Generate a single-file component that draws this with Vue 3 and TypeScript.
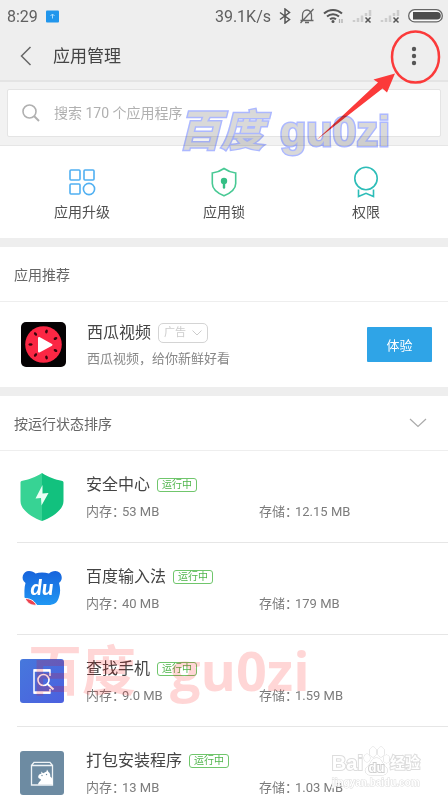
<script setup lang="ts">
interface AppEntry {
  id: string
  name: string
  memory: string
  storage: string
}

interface Shortcut {
  id: string
  label: string
}

const shortcuts: Shortcut[] = [
  { id: 'upgrade', label: '应用升级' },
  { id: 'lock', label: '应用锁' },
  { id: 'permission', label: '权限' },
]

const apps: AppEntry[] = [
  { id: 'security', name: '安全中心', memory: '53 MB', storage: '12.15 MB' },
  { id: 'input', name: '百度输入法', memory: '40 MB', storage: '179 MB' },
  { id: 'find', name: '查找手机', memory: '9.0 MB', storage: '1.59 MB' },
  { id: 'installer', name: '打包安装程序', memory: '13 MB', storage: '1.03 MB' },
]

const signals: number[] = [1, 2]
</script>

<template>
  <div class="page">
    <div class="status">
      <span>8:29</span>
      <svg class="status-app" width="13" height="13" viewBox="0 0 13 13">
        <rect width="13" height="12" y="0.5" rx="1" fill="#2196ec" />
        <path d="M4.5 6 6.5 4l2 2M6.5 4v4.500" fill="none" stroke="#a9dcff" stroke-width="1" />
      </svg>
      <span class="speed">39.1K/s</span>
      <svg width="12" height="16" viewBox="0 0 12 16">
        <path d="M1 4.500 10.500 11.500 6 15V1l4.500 3.500L1 11.500" fill="none" stroke="#555" stroke-width="1.500" />
      </svg>
      <svg width="16" height="16" viewBox="0 0 16 16">
        <path d="M1.500 12.500h13M3.500 12V7a4.500 5 0 0 1 9 0v5M6 14.500h4M14.500 1 1.500 15" fill="none" stroke="#666" stroke-width="1.300" />
      </svg>
      <svg width="21" height="16" viewBox="0 0 21 16">
        <path d="M1 5.500a13 13 0 0 1 18 0M4 8.500a9 9 0 0 1 12 0M7 11.300a5 5 0 0 1 6 0" fill="none" stroke="#555" stroke-width="2" />
        <circle cx="10" cy="13.500" r="1.500" fill="#555" />
        <path d="M16.500 11v4M19 11v4" stroke="#aaa" stroke-width="1.200" />
      </svg>
      <svg v-for="s in signals" :key="s" width="20" height="15" viewBox="0 0 20 15">
        <path d="M2 13v-2M6 13V9M10 13V6.500M14 7V4M18 7V1" stroke="#ccc" stroke-width="2.500" />
        <path d="m13.500 8.500 5 5m0-5-5 5" stroke="#555" stroke-width="1.500" />
      </svg>
      <svg width="35" height="14" viewBox="0 0 35 14">
        <rect x="0.700" y="0.700" width="33.600" height="12.200" rx="6" fill="#f8f8f8" stroke="#666" stroke-width="1.300" />
        <path d="M5 3h24a3.500 3.500 0 0 1 0 7.600H5z" fill="#4d4d4d" />
      </svg>
    </div>

    <header class="header">
      <button class="icon-button back" type="button" aria-label="返回">
        <svg width="12" height="20" viewBox="0 0 12 20">
          <path d="M10.500 1 1.500 10l9 9" fill="none" stroke="#666" stroke-width="1.500" />
        </svg>
      </button>
      <h1>应用管理</h1>
      <button class="icon-button more" type="button" aria-label="更多">
        <svg width="6" height="20" viewBox="0 0 6 20">
          <g fill="#555">
            <circle cx="3" cy="3" r="2.200" />
            <circle cx="3" cy="10" r="2.200" />
            <circle cx="3" cy="17" r="2.200" />
          </g>
        </svg>
      </button>
    </header>

    <div class="search-area">
      <label class="search">
        <svg width="18" height="18" viewBox="0 0 18 18">
          <circle cx="7.500" cy="7.500" r="6.500" fill="none" stroke="#b0b0b0" stroke-width="1.600" />
          <path d="m12 12 5 5" stroke="#b0b0b0" stroke-width="2" />
        </svg>
        <input type="search" placeholder="搜索 170 个应用程序" aria-label="搜索应用程序" />
      </label>
    </div>

    <nav class="shortcuts">
      <a v-for="item in shortcuts" :key="item.id" href="#">
        <svg v-if="item.id === 'upgrade'" width="28" height="32" viewBox="0 0 28 32" fill="none" stroke="#50b0f2" stroke-width="1.600">
          <rect x="2" y="4" width="10" height="10" rx="1" />
          <rect x="16" y="4" width="10" height="10" rx="1" />
          <rect x="2" y="18" width="10" height="10" rx="1" />
          <circle cx="21" cy="23" r="5.600" />
        </svg>
        <svg v-else-if="item.id === 'lock'" width="28" height="32" viewBox="0 0 28 32">
          <path d="M14 2.500C10.500 5 6.500 6.500 2.300 7v10.500c0 5 5 9.500 11.700 12.300 6.700-2.800 11.700-7.300 11.700-12.300V7C21.500 6.500 17.500 5 14 2.500Z" fill="none" stroke="#48c994" stroke-width="1.600" />
          <circle cx="14" cy="15" r="3.200" fill="#35bf85" />
          <path d="M14 15v6.500" stroke="#35bf85" stroke-width="2.400" stroke-linecap="round" />
        </svg>
        <svg v-else width="28" height="32" viewBox="0 0 28 32" fill="none" stroke="#2dbdb8" stroke-width="1.600">
          <circle cx="14" cy="12.500" r="11.200" />
          <path d="M6.500 23.500v7L14 27.300l7.500 3.200v-7" />
        </svg>
        <span>{{ item.label }}</span>
      </a>
    </nav>

    <section class="block">
      <h2 class="section-title">应用推荐</h2>
      <div class="promo">
        <svg class="promo-icon" width="45" height="45" viewBox="0 0 45 45">
          <rect width="45" height="45" rx="5" fill="#050203" />
          <circle cx="22.500" cy="22.500" r="18.300" fill="#fb2744" />
          <g fill="#35060d">
            <ellipse cx="25.500" cy="9.500" rx="1.300" ry="2" transform="rotate(12 25.500 9.500)" />
            <ellipse cx="34.500" cy="16.500" rx="1.300" ry="2" transform="rotate(60 34.500 16.500)" />
            <ellipse cx="34.500" cy="28.500" rx="1.300" ry="2" transform="rotate(120 34.500 28.500)" />
            <ellipse cx="25.500" cy="35.500" rx="1.300" ry="2" transform="rotate(-12 25.500 35.500)" />
            <ellipse cx="14.500" cy="33" rx="1.300" ry="2" transform="rotate(35 14.500 33)" />
            <ellipse cx="9.500" cy="22.500" rx="2" ry="1.300" />
            <ellipse cx="14.500" cy="12" rx="1.300" ry="2" transform="rotate(-35 14.500 12)" />
          </g>
          <path d="M18 16v13.500l12.500-6.700Z" fill="#fff" stroke="#fff" stroke-width="2" stroke-linejoin="round" />
        </svg>
        <div class="promo-text">
          <div class="name-line">
            <h3>西瓜视频</h3>
            <button class="ad" type="button">
              广告
              <svg width="10" height="6" viewBox="0 0 10 6">
                <path d="m0.500 0.500 4.500 4.500 4.500-4.500" fill="none" stroke="#ccc" />
              </svg>
            </button>
          </div>
          <p>西瓜视频，给你新鲜好看</p>
        </div>
        <button class="try" type="button">体验</button>
      </div>
    </section>

    <section class="block">
      <button class="section-title sort" type="button">
        <span>按运行状态排序</span>
        <svg width="18" height="10" viewBox="0 0 18 10">
          <path d="m1 1 8 7.500L17 1" fill="none" stroke="#aaa" stroke-width="1.200" />
        </svg>
      </button>
      <ul class="apps">
        <li v-for="app in apps" :key="app.id">
          <svg v-if="app.id === 'security'" class="app-icon" width="44" height="50" viewBox="0 0 44 50">
            <path d="M22 1C16 5 8 8 2.500 8.700.900 8.900.500 9.500.500 11v18C.500 38 12 45.500 22 49Z" fill="#37d394" />
            <path d="M22 1c6 4 14 7 19.500 7.700 1.600.200 2 .800 2 2.300v18c0 9-11.500 16.500-21.500 20Z" fill="#12c17e" />
            <path d="M22.500 13 15.500 26.500l5.500-.500.500 7.500L28.500 21l-6 .500Z" fill="#eafff5" />
          </svg>
          <svg v-else-if="app.id === 'input'" class="app-icon" width="44" height="44" viewBox="0 0 44 44">
            <defs>
              <linearGradient id="bear" x1="0" y1="0" x2="0" y2="1">
                <stop offset="0" stop-color="#1763dc" />
                <stop offset="1" stop-color="#2097f3" />
              </linearGradient>
            </defs>
            <path d="M9 4c3 0 5 1 6.500 2.500 4-1.200 9-1.200 13.500 0C30.500 5 32.500 4 35.500 4 42 4 44 13 39 16c1.500 5 1.500 10 0 14-1.500 6-5 8-11 8H17L4.500 30.500C4.500 26 4 21 5.500 16 0 12 3 4 9 4Z" fill="url(#bear)" />
            <path d="M5 31.500C10 31.500 14 33.500 16.500 38 11.500 39 7.500 36.500 5 31.500Z" fill="#ed4350" stroke="#fff" stroke-width="1" />
            <text class="du" x="22" y="28" text-anchor="middle">du</text>
          </svg>
          <svg v-else-if="app.id === 'find'" class="app-icon" width="44" height="44" viewBox="0 0 44 44">
            <defs>
              <linearGradient id="finder" x1="0" y1="0" x2="1" y2="1">
                <stop offset="0" stop-color="#4678dc" />
                <stop offset="1" stop-color="#4c60df" />
              </linearGradient>
            </defs>
            <rect width="44" height="44" rx="3" fill="url(#finder)" />
            <path d="M30 17v-6H14v23h16v-4" fill="none" stroke="#fff" stroke-width="1.500" />
            <path d="M14 11.500h16M14 33.500h16" stroke="#fff" stroke-width="2.500" />
            <circle cx="23.500" cy="21" r="5.500" fill="none" stroke="#fff" stroke-width="1.600" />
            <path d="m27.500 25 6 5.500" stroke="#fff" stroke-width="2" />
          </svg>
          <svg v-else class="app-icon" width="44" height="44" viewBox="0 0 44 44">
            <rect width="44" height="44" rx="3" fill="#6d8ba2" />
            <path d="M11.500 14.500h21V34h-21ZM11.500 14.500l2.500-3.200h16l2.500 3.200" fill="none" stroke="#eef3f6" stroke-width="1.300" />
            <path d="M18.500 27c-1-3 1.500-4 3-4.500l-.500-2 2.200 1.700 3.300-1.700.500-2 1.500 2.500c1.500 1 2 2.500 1.700 4.500 2 1 2.500 3 2.500 5.500v2.500H18c.5-3 3-3.500 3-5Z" fill="#fff" />
            <circle cx="22" cy="24.500" r="0.700" fill="#6d8ba2" />
            <circle cx="26.500" cy="23.500" r="0.700" fill="#6d8ba2" />
          </svg>
          <div class="app-text">
            <div class="name-line">
              <h3>{{ app.name }}</h3>
              <span class="running">运行中</span>
            </div>
            <dl>
              <div>
                <dt>内存：</dt>
                <dd>{{ app.memory }}</dd>
              </div>
              <div>
                <dt>存储：</dt>
                <dd>{{ app.storage }}</dd>
              </div>
            </dl>
          </div>
        </li>
      </ul>
    </section>

    <svg class="callout" width="128" height="114" viewBox="0 0 128 114">
      <ellipse cx="97.500" cy="29" rx="23.500" ry="25.500" fill="none" stroke="#fb3a3a" stroke-width="2.500" />
      <path d="m77 45.500-21.500 6 4.500 3L-1.500 112l66-51.500 4.500 4Z" fill="#fb3a3a" />
    </svg>
    <div class="mark mark-top"><span class="brush">百度</span><span>gu0zi</span></div>
    <div class="mark mark-low"><span>百度</span><span>gu0zi</span></div>
    <div class="brand">
      <div class="brand-name">
        <span>Bai</span>
        <svg width="27" height="30" viewBox="0 0 27 30">
          <g fill="#fff" stroke="#d5d5d5">
            <ellipse cx="4" cy="12" rx="3" ry="4" />
            <ellipse cx="10" cy="6" rx="3.500" ry="5" />
            <ellipse cx="18" cy="6" rx="3.500" ry="5" />
            <ellipse cx="23.500" cy="13" rx="3" ry="4" />
            <path d="M13.500 12c5 0 5 5 9 8.500 4 4 1 8.500-3 8.500h-12c-5 0-7-5-3-8.500C8.500 17 8.500 12 13.500 12Z" />
          </g>
          <text class="paw-text" x="13.500" y="26" text-anchor="middle">du</text>
        </svg>
        <span class="brand-cn">经验</span>
      </div>
      <div class="brand-url">jingyan.baidu.com</div>
    </div>
  </div>
</template>

<style>
body {
  margin: 0;
  background: #fff;
}
</style>

<style scoped>
.page {
  position: relative;
  height: 100vh;
  overflow: hidden;
  background: #fff;
  color: #444;
  font-family: Roboto, "Noto Sans CJK SC", sans-serif;
}

h1,
h2,
h3,
p,
ul,
dl,
dd {
  margin: 0;
  padding: 0;
  font-weight: 400;
}

button {
  font-family: inherit;
  padding: 0;
  border: 0;
  background: none;
  cursor: pointer;
}

svg {
  display: block;
  flex: none;
}

.status {
  display: flex;
  align-items: center;
  gap: 8px;
  height: 32px;
  padding: 0 5px 0 7px;
  background: #eee;
  color: #606060;
  font-size: 16px;
}

.speed {
  margin-left: auto;
}

.header {
  display: flex;
  align-items: center;
  height: 48px;
  padding: 0 24px 0 12px;
  border-bottom: 2px solid #e4e4e4;
  background: #eee;
}

.icon-button {
  display: flex;
  align-items: center;
  justify-content: center;
  height: 40px;
}

.back {
  width: 28px;
}

.more {
  width: 20px;
}

h1 {
  flex: 1;
  margin-left: 13px;
  font-size: 17px;
  line-height: 24px;
}

.search-area {
  padding: 7px 7px 8px;
  border-bottom: 1px solid #e6e6e6;
  background: #f2f2f2;
}

.search {
  display: flex;
  align-items: center;
  gap: 14px;
  box-sizing: border-box;
  height: 48px;
  padding: 0 14px;
  border: 1px solid #e4e4e4;
  border-radius: 2px;
  background: #fff;
}

.search input {
  flex: 1;
  min-width: 0;
  padding: 0;
  border: 0;
  outline: none;
  background: transparent;
  color: #444;
  font-family: inherit;
  font-size: 14px;
  line-height: 20px;
}

.search input::placeholder {
  color: #b0b0b0;
}

.shortcuts {
  display: grid;
  grid-template-columns: repeat(3, 1fr);
  box-sizing: border-box;
  height: 92px;
  padding: 20px 11px 0;
}

.shortcuts a {
  display: flex;
  flex-direction: column;
  align-items: center;
  gap: 4px;
  color: #505050;
  font-size: 14px;
  line-height: 20px;
  text-decoration: none;
}

.block {
  border-top: 9px solid #eee;
}

.section-title {
  display: flex;
  align-items: center;
  justify-content: space-between;
  box-sizing: border-box;
  width: 100%;
  height: 55px;
  padding: 0 21px 0 14px;
  border-bottom: 1px solid #eee;
  color: #666;
  font-size: 14px;
}

.promo {
  display: flex;
  align-items: center;
  height: 85px;
  padding: 0 16px 0 21px;
}

.promo-icon {
  margin-right: 21px;
}

.promo-text {
  flex: 1;
  min-width: 0;
}

.name-line {
  display: flex;
  align-items: center;
  gap: 7px;
}

h3 {
  font-size: 16px;
  line-height: 24px;
  color: #444;
}

.promo-text p {
  margin-top: 4px;
  color: #888;
  font-size: 13px;
  line-height: 20px;
}

.ad {
  display: flex;
  align-items: center;
  justify-content: center;
  gap: 6px;
  box-sizing: border-box;
  width: 50px;
  height: 20px;
  border: 1px solid #d4d4d4;
  border-radius: 5px;
  color: #ccc;
  font-size: 11px;
  line-height: 16px;
}

.try {
  width: 65px;
  height: 35px;
  border-radius: 1px;
  background: #2fa4e7;
  color: #fff;
  font-size: 13px;
}

.apps {
  list-style: none;
}

.apps li {
  display: flex;
  align-items: center;
  box-sizing: border-box;
  height: 92px;
  margin-left: 17px;
  padding-left: 3px;
  border-bottom: 1px solid #e6e6e6;
}

.app-icon {
  margin-right: 22px;
}

.app-text {
  flex: 1;
  min-width: 0;
  padding-top: 2px;
}

.running {
  box-sizing: border-box;
  width: 40px;
  height: 14px;
  border: 1px solid #70c66c;
  border-radius: 3px;
  color: #4fb54b;
  font-size: 10px;
  line-height: 12px;
  text-align: center;
}

dl {
  display: grid;
  grid-template-columns: 1fr 1fr;
  margin-top: 5px;
  padding-right: 16px;
  color: #7c7c7c;
  font-size: 13px;
  line-height: 20px;
}

dl div {
  display: flex;
}

dt {
  width: 36px;
  white-space: nowrap;
}

.du {
  fill: #fff;
  font-family: Lato, sans-serif;
  font-size: 21px;
  font-style: italic;
  font-weight: 900;
}

.callout {
  position: absolute;
  top: 28px;
  right: 2px;
  overflow: visible;
}

.mark {
  position: absolute;
  display: flex;
  align-items: center;
  white-space: nowrap;
  font-weight: 700;
  pointer-events: none;
}

.mark-top {
  top: 104px;
  left: 178px;
  gap: 16px;
  color: #d9d9d9;
  font-family: "Liberation Sans", "Noto Sans CJK SC", sans-serif;
  font-size: 43px;
  line-height: 54px;
  paint-order: stroke fill;
  -webkit-text-stroke: 3px #acb8ff;
  mix-blend-mode: multiply;
}

.brush {
  font-style: italic;
}

.mark-low {
  top: 634px;
  left: 28px;
  gap: 34px;
  color: rgba(255, 0, 0, 0.16);
  font-family: "Open Sans", "Noto Sans CJK SC", sans-serif;
  font-size: 54px;
  line-height: 72px;
}

.brand {
  position: absolute;
  right: 28px;
  bottom: 10px;
  color: #fff;
  font-family: "Liberation Sans", "Noto Sans CJK SC", sans-serif;
  font-weight: 700;
  paint-order: stroke fill;
  -webkit-text-stroke: 2px #ddd;
}

.brand-name {
  display: flex;
  align-items: flex-end;
  font-size: 20px;
  line-height: 26px;
}

.brand-cn {
  font-size: 15px;
}

.brand-url {
  font-size: 10px;
  line-height: 14px;
  -webkit-text-stroke: 1px #ddd;
}

.paw-text {
  fill: #fff;
  stroke: #d0d0d0;
  stroke-width: 2px;
  font-size: 13px;
}
</style>
